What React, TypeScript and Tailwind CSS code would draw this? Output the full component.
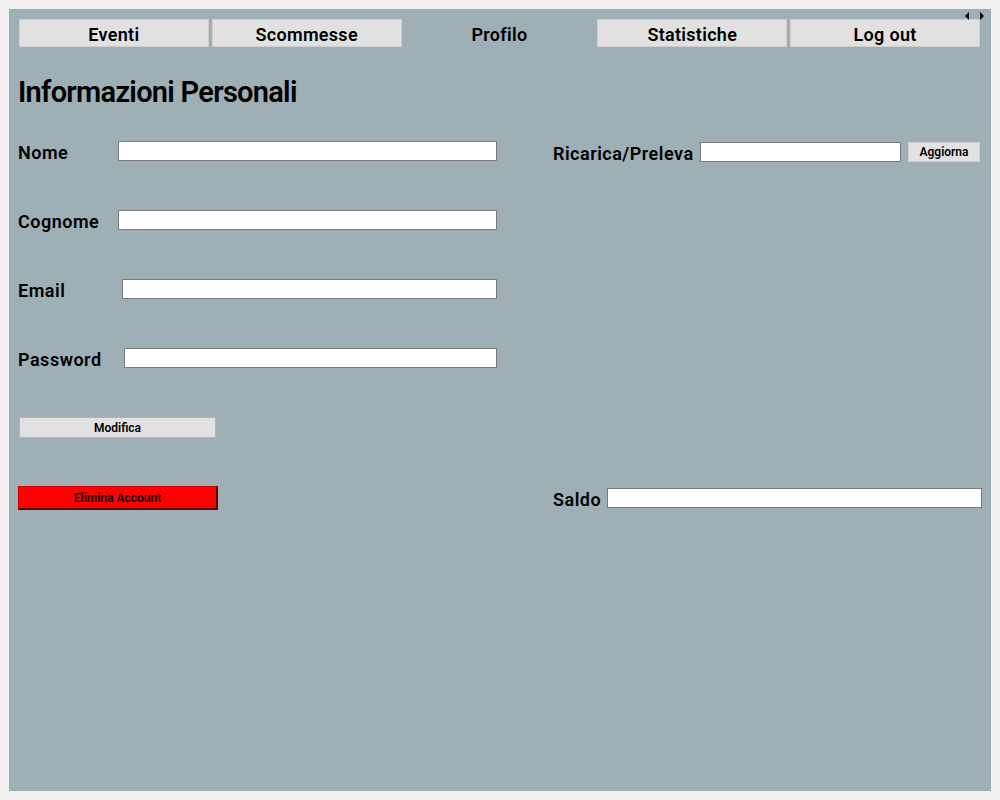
import React from "react";

const font = { fontFamily: "Roboto, 'Liberation Sans', sans-serif" };

const tabs = [
  { label: "Eventi", active: false },
  { label: "Scommesse", active: false },
  { label: "Profilo", active: true },
  { label: "Statistiche", active: false },
  { label: "Log out", active: false },
];

const fields = [
  { label: "Nome", w: "w-[100px]" },
  { label: "Cognome", w: "w-[100px]" },
  { label: "Email", w: "w-[104px]" },
  { label: "Password", w: "w-[106px]" },
];

function Field({ label, w }: { label: string; w: string }) {
  return (
    <div className="flex h-[20px] items-center">
      <span className={`${w} shrink-0 pt-[3px] text-[18px] font-semibold tracking-[0.5px] text-black`}>{label}</span>
      <input className="h-[20px] flex-1 border border-[#7a7a7a] bg-white outline-none" />
    </div>
  );
}

export default function App() {
  return (
    <div className="h-[800px] w-[1000px] bg-[#f0f0f0] p-[9px]" style={font}>
      <div className="relative h-full bg-[#9eafb6] px-[9px] pt-[10px]">
        {/* scroll arrows */}
        <div className="absolute right-[6px] top-[3px] flex gap-[9px]">
          <svg width="6" height="8" viewBox="0 0 6 8">
            <path d="M5 0 L1 4 L5 8 Z" fill="#000" />
          </svg>
          <svg width="6" height="8" viewBox="0 0 6 8">
            <path d="M1 0 L5 4 L1 8 Z" fill="#000" />
          </svg>
        </div>

        {/* tabs */}
        <nav className="ml-px mr-[2px] grid grid-cols-5 gap-[3px]">
          {tabs.map((t) => (
            <div
              key={t.label}
              className={`flex h-[28px] items-center justify-center pt-[2px] text-[18px] font-semibold tracking-[0.3px] text-black ${
                t.active ? "" : "border border-[#cfcfcf] bg-[#e1e1e1]"
              }`}
            >
              {t.label}
            </div>
          ))}
        </nav>

        <h1 className="mt-[28px] text-[29px] font-semibold leading-[34px] tracking-tight text-black">
          Informazioni Personali
        </h1>

        <div className="mt-[32px] grid grid-cols-[479px_429px] gap-x-[56px]">
          {/* left column */}
          <div className="flex flex-col">
            <div className="flex flex-col gap-[49px]">
              {fields.map((f) => (
                <Field key={f.label} {...f} />
              ))}
            </div>
            <button className="ml-px mt-[49px] h-[21px] w-[197px] border border-[#b5b5b5] bg-[#e1e1e1] text-[12px] font-semibold text-black">
              Modifica
            </button>
            <button className="mt-[48px] h-[24px] w-[200px] border border-[#d00000] border-b-2 border-r-2 border-b-[#5a0000] border-r-[#5a0000] bg-[#ff0000] text-[12px] font-semibold text-black">
              Elimina Account
            </button>
          </div>

          {/* right column */}
          <div className="flex flex-col justify-between">
            <div className="mt-px flex h-[20px] items-center">
              <span className="w-[147px] shrink-0 whitespace-nowrap pt-[3px] text-[18px] font-semibold tracking-[0.5px] text-black">
                Ricarica/Preleva
              </span>
              <input className="h-[20px] w-[201px] border border-[#7a7a7a] bg-white outline-none" />
              <button className="ml-[7px] h-[20px] w-[72px] border border-[#cfcfcf] bg-[#e1e1e1] text-[12px] font-semibold text-black">
                Aggiorna
              </button>
            </div>
            <div className="mb-[2px] flex h-[20px] items-center">
              <span className="w-[54px] shrink-0 pt-[3px] text-[18px] font-semibold tracking-[0.5px] text-black">Saldo</span>
              <input className="h-[20px] flex-1 border border-[#7a7a7a] bg-white outline-none" />
            </div>
          </div>
        </div>
      </div>
    </div>
  );
}
